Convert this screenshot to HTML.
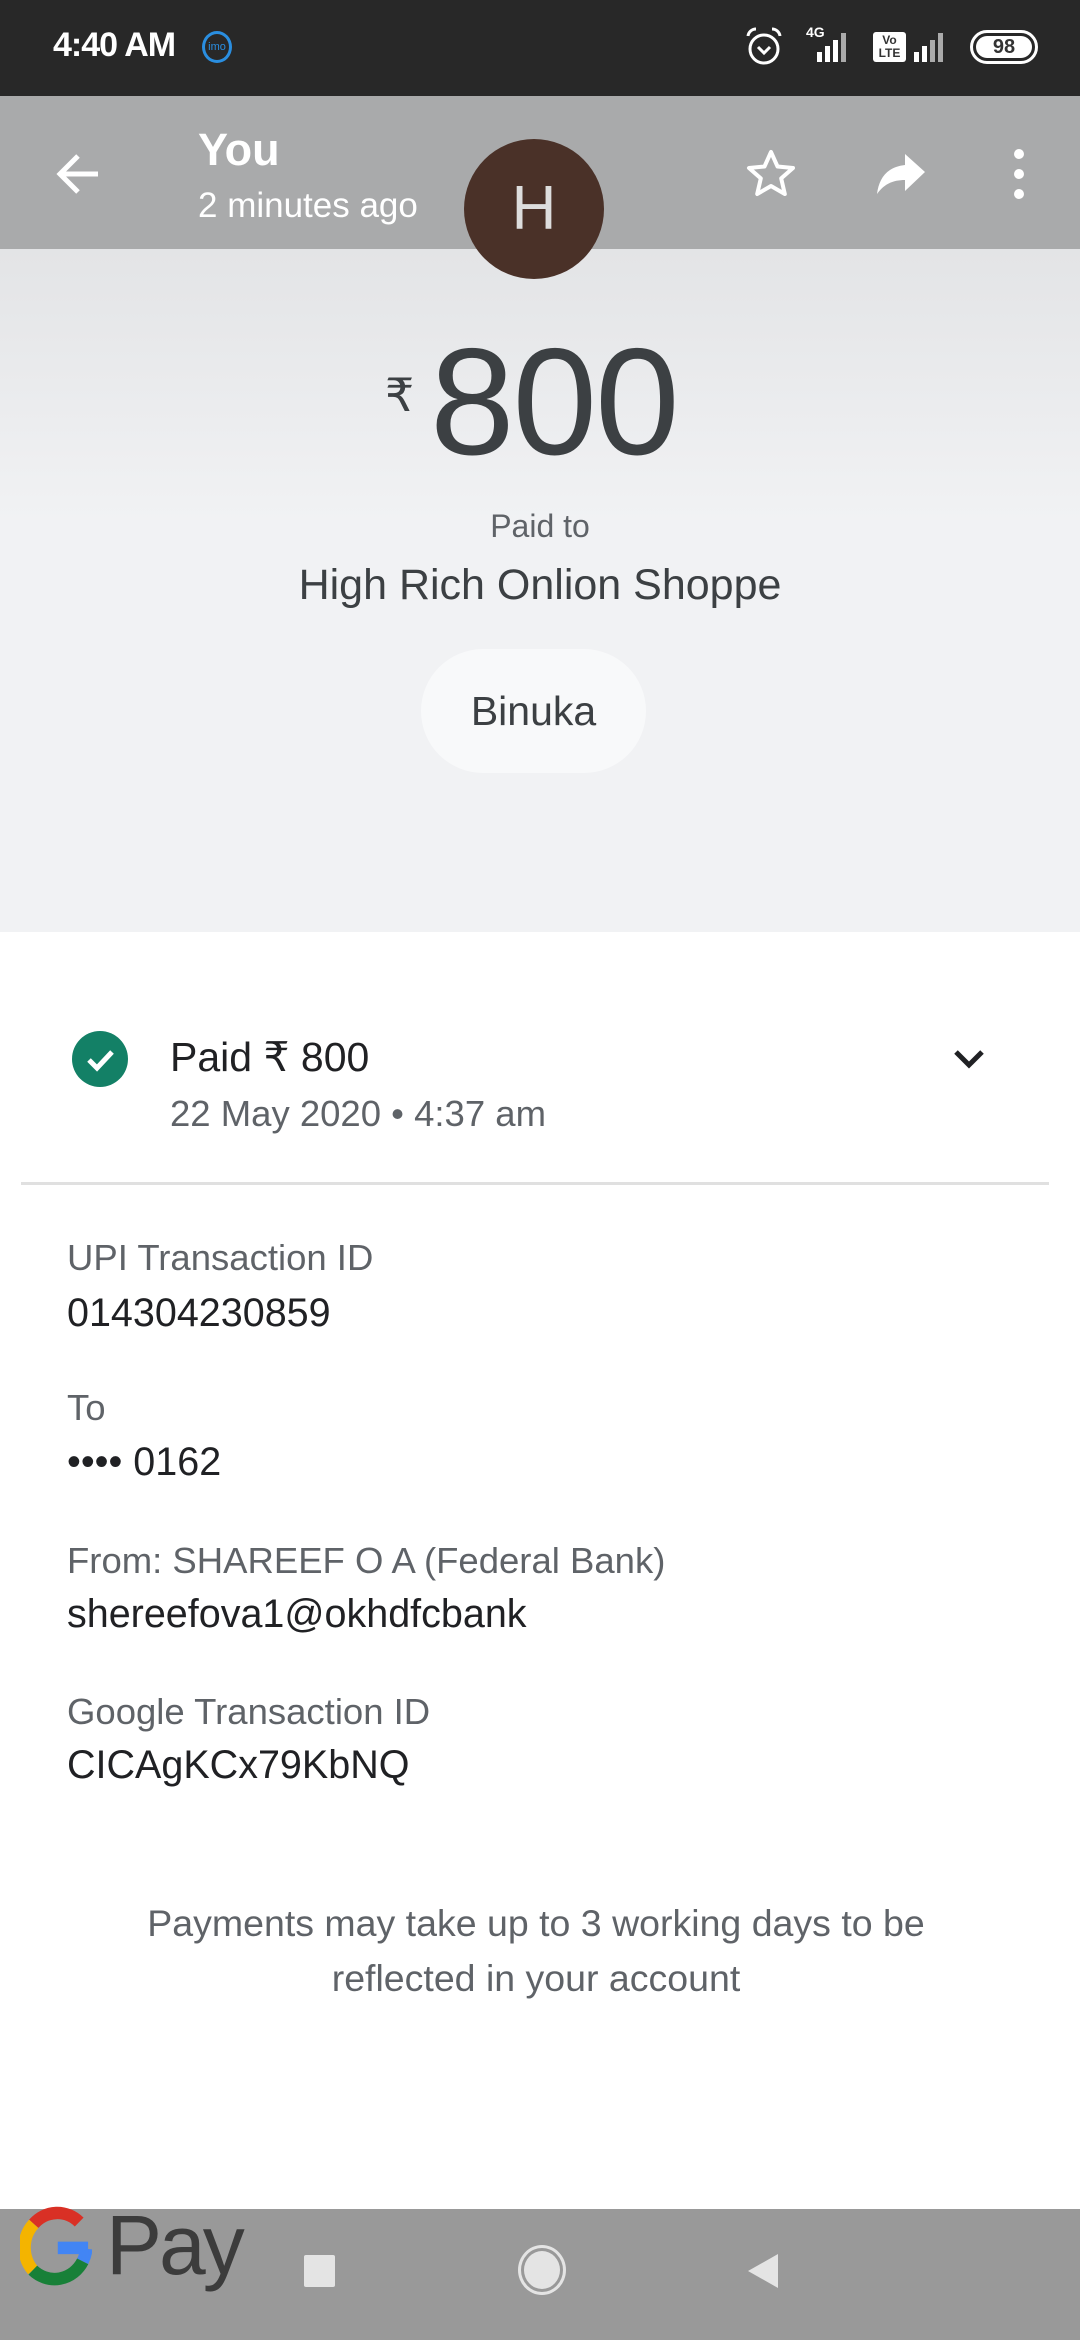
<!DOCTYPE html>
<html><head><meta charset="utf-8"><style>
*{margin:0;padding:0;box-sizing:border-box}
body{width:1080px;height:2340px;position:relative;overflow:hidden;font-family:"Liberation Sans",sans-serif;background:#fff}
.a{position:absolute;white-space:nowrap}
.lbl{font-size:36.5px;color:#5f6368}
.val{font-size:39.5px;color:#202124}
</style></head><body>
<div class="a" style="left:0;top:0;width:1080px;height:96px;background:#282828"></div>
<div class="a" style="left:53px;top:26px;font-size:34px;color:#fff;font-weight:bold;letter-spacing:-1px">4:40 AM</div>
<div class="a" style="left:202px;top:31px;width:30px;height:32px;border:3px solid #2a8ee0;border-radius:50%;font-size:11px;color:#2a8ee0;text-align:center;line-height:26px">imo</div>
<svg class="a" style="left:744px;top:26px" width="40" height="42"><circle cx="20" cy="23" r="14" stroke="#fff" stroke-width="3" fill="none"/><path d="M14 21l6 6 6-6" stroke="#fff" stroke-width="3" fill="none"/><path d="M4 10a8 8 0 0 1 8-7M36 10a8 8 0 0 0-8-7" stroke="#fff" stroke-width="3" fill="none"/></svg>
<div class="a" style="left:806px;top:24px;font-size:14px;color:#fff;font-weight:bold">4G</div>
<svg class="a" style="left:805px;top:30px" width="54" height="32"><rect x="12" y="22" width="5" height="10" fill="#fff"/><rect x="20" y="16" width="5" height="16" fill="#fff"/><rect x="28" y="10" width="5" height="22" fill="#fff"/><rect x="36" y="3" width="5" height="29" fill="#aaa"/></svg>
<div class="a" style="left:873px;top:32px;width:33px;height:30px;background:#fff;border-radius:3px;font-size:12px;line-height:13px;text-align:center;color:#333;font-weight:bold;padding-top:2px">Vo<br>LTE</div>
<svg class="a" style="left:910px;top:30px" width="44" height="32"><rect x="4" y="22" width="5" height="10" fill="#fff"/><rect x="12" y="16" width="5" height="16" fill="#fff"/><rect x="20" y="10" width="5" height="22" fill="#aaa"/><rect x="28" y="3" width="5" height="29" fill="#aaa"/></svg>
<div class="a" style="left:970px;top:30px;width:68px;height:34px;border:3px solid #fff;border-radius:17px;padding:3px"><div style="background:#fff;border-radius:12px;height:22px;font-size:20px;font-weight:bold;color:#333;text-align:center;line-height:22px">98</div></div>

<div class="a" style="left:0;top:96px;width:1080px;height:153px;background:#a9aaab"></div>
<div class="a" style="left:0;top:249px;width:1080px;height:683px;background:linear-gradient(#e3e4e6,#f1f2f4 40%,#f1f2f4)"></div>
<svg class="a" style="left:52px;top:148px" width="52" height="52"><path d="M46 26H8M26 8L8 26l18 18" stroke="#fff" stroke-width="5" fill="none"/></svg>
<div class="a" style="left:198px;top:124px;font-size:45px;font-weight:bold;color:#fff">You</div>
<div class="a" style="left:198px;top:186px;font-size:35px;color:#fff">2 minutes ago</div>
<div class="a" style="left:464px;top:139px;width:140px;height:140px;border-radius:50%;background:#4a3128;color:#ddd;font-size:62px;text-align:center;line-height:140px">H</div>
<svg class="a" style="left:745px;top:148px" width="52" height="52"><path d="M26 4l6.5 14.5 15.5 1.5-11.8 10.4 3.6 15.6L26 38l-13.8 8 3.6-15.6L4 20l15.5-1.5z" stroke="#fff" stroke-width="4" fill="none" stroke-linejoin="round"/></svg>
<svg class="a" style="left:873px;top:148px" width="56" height="52"><path d="M32 6v11C14 19 6 30 4 46c7-10 16-14 28-14v11l20-19z" fill="#fff"/></svg>
<svg class="a" style="left:1008px;top:148px" width="22" height="52"><circle cx="11" cy="6" r="5" fill="#fff"/><circle cx="11" cy="26" r="5" fill="#fff"/><circle cx="11" cy="46" r="5" fill="#fff"/></svg>

<div class="a" style="left:385px;top:368px;font-size:46px;color:#3c4043">₹</div>
<div class="a" style="left:430px;top:315px;font-size:152px;color:#3c4043;letter-spacing:-2px">800</div>
<div class="a" style="left:0;width:1080px;top:508px;text-align:center;font-size:32px;color:#5f6368">Paid to</div>
<div class="a" style="left:0;width:1080px;top:561px;text-align:center;font-size:43px;color:#3c4043">High Rich Onlion Shoppe</div>
<div class="a" style="left:421px;top:649px;width:225px;height:124px;border-radius:62px;background:#f8f9fa;font-size:41px;color:#3c4043;text-align:center;line-height:124px">Binuka</div>

<div class="a" style="left:72px;top:1031px;width:56px;height:56px;border-radius:50%;background:#138066"></div>
<svg class="a" style="left:72px;top:1031px" width="56" height="56"><path d="M17 29l8 8 15-16" stroke="#fff" stroke-width="5" fill="none"/></svg>
<div class="a" style="left:170px;top:1033px;font-size:41px;color:#202124">Paid ₹ 800</div>
<div class="a" style="left:170px;top:1093px;font-size:36.5px;color:#5f6368">22 May 2020 • 4:37 am</div>
<svg class="a" style="left:952px;top:1048px" width="34" height="22"><path d="M4 4l13 13 13-13" stroke="#202124" stroke-width="5" fill="none"/></svg>
<div class="a" style="left:21px;top:1182px;width:1028px;height:3px;background:#e0e0e0"></div>

<div class="a lbl" style="left:67px;top:1237px">UPI Transaction ID</div>
<div class="a val" style="left:67px;top:1291px">014304230859</div>
<div class="a lbl" style="left:67px;top:1387px">To</div>
<div class="a val" style="left:67px;top:1440px">•••• 0162</div>
<div class="a lbl" style="left:67px;top:1540px">From: SHAREEF O A (Federal Bank)</div>
<div class="a val" style="left:67px;top:1592px">shereefova1@okhdfcbank</div>
<div class="a lbl" style="left:67px;top:1691px">Google Transaction ID</div>
<div class="a val" style="left:67px;top:1743px">CICAgKCx79KbNQ</div>
<div class="a" style="left:0;width:1072px;top:1896px;text-align:center;font-size:37.5px;color:#5f6368;line-height:55px;white-space:normal">Payments may take up to 3 working days to be<br>reflected in your account</div>

<div class="a" style="left:0;top:2209px;width:1080px;height:131px;background:#999"></div>
<svg class="a" style="left:20px;top:2206px" width="72" height="82" viewBox="0 0 80 92"><g fill="none" stroke-width="14"><path d="M66 18A36 38 0 0 0 15 20" stroke="#d93025"/><path d="M15 20A36 38 0 0 0 14 72" stroke="#f4b400"/><path d="M14 72A36 38 0 0 0 70 62" stroke="#188038"/><path d="M70 62A36 38 0 0 0 74 48" stroke="#4285f4"/></g><rect x="42" y="40" width="34" height="14" fill="#4285f4"/></svg>
<div class="a" style="left:106px;top:2197px;font-size:84px;color:#3c3c3c;letter-spacing:-3px">Pay</div>
<div class="a" style="left:304px;top:2255px;width:31px;height:32px;background:#e4e4e4;border-radius:2px"></div>
<div class="a" style="left:518px;top:2245px;width:48px;height:50px;border:3px solid #e4e4e4;border-radius:50%;padding:3px"><div style="width:100%;height:100%;border-radius:50%;background:#e4e4e4"></div></div>
<svg class="a" style="left:746px;top:2252px" width="34" height="38"><path d="M32 2v34L2 19z" fill="#e4e4e4" stroke-linejoin="round"/></svg>
</body></html>
